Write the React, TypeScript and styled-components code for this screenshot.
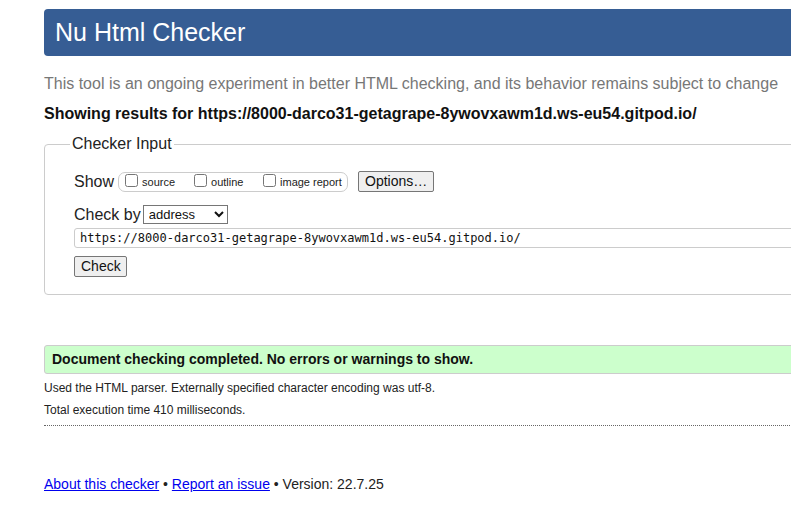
import React from "react";
import styled, { createGlobalStyle } from "styled-components";

const Global = createGlobalStyle`
  html, body { margin: 0; padding: 0; background: #fff; overflow: hidden; }
  body { font-family: "Liberation Sans", Arial, sans-serif; color: #111; }
`;

const Page = styled.div`
  width: 820px;
  padding: 9px 0 0 44px;
  box-sizing: content-box;
`;

const Header = styled.h1`
  margin: 0;
  height: 47px;
  background: #365d94;
  border-radius: 4px;
  color: #fff;
  font-weight: normal;
  font-size: 25px;
  line-height: 47px;
  padding-left: 11px;
`;

const Intro = styled.p`
  margin: 18px 0 0;
  color: #777;
  font-size: 16px;
  line-height: 19px;
`;

const Results = styled.p`
  margin: 11px 0 0;
  font-weight: bold;
  font-size: 16px;
  line-height: 19px;
  color: #111;
`;

const Fieldset = styled.fieldset`
  margin: 12px 0 0;
  padding: 18px 0 16px 29px;
  border: 1px solid #ccc;
  border-radius: 4px;
  height: 124px;
  box-sizing: content-box;
`;

const Legend = styled.legend`
  margin-left: -4px;
  padding: 0 2px;
  font-size: 16px;
  color: #222;
`;

const Row = styled.div<{ $mt?: number }>`
  display: flex;
  align-items: center;
  margin-top: ${(p) => p.$mt ?? 0}px;
  font-size: 16px;
`;

const Label = styled.span<{ $mr?: number }>`
  font-size: 16px;
  color: #222;
  margin-right: ${(p) => p.$mr ?? 4}px;
`;

const Options = styled.span`
  display: inline-flex;
  align-items: center;
  border: 1px solid #ccc;
  border-radius: 7px;
  height: 18px;
  padding: 0 3px 0 6px;
  width: 219px;
  box-sizing: content-box;
`;

const CheckItem = styled.label<{ $w: number }>`
  display: inline-flex;
  align-items: center;
  width: ${(p) => p.$w}px;
  font-size: 11px;
  color: #222;
`;

const Box = styled.input`
  margin: 0 4px 2px 0;
  width: 13px;
  height: 13px;
`;

const Btn = styled.button`
  font-family: "Liberation Sans", Arial, sans-serif;
  font-size: 14px;
  color: #111;
  background: #efefef;
  border: 1px solid #767676;
  border-radius: 2px;
  padding: 1px 6px;
  height: 21px;
  line-height: 17px;
`;

const OptionsBtn = styled(Btn)`
  margin-left: 10px;
  width: 76px;
`;

const Select = styled.select`
  font-family: "Liberation Sans", Arial, sans-serif;
  font-size: 13px;
  width: 85px;
  height: 19px;
  border: 1px solid #767676;
  border-radius: 0;
  background: #fff;
  color: #111;
  padding: 0 1px;
`;

const UrlInput = styled.input`
  display: block;
  width: 760px;
  height: 20px;
  box-sizing: border-box;
  border: 1px solid #ccc;
  border-radius: 3px;
  font-family: "DejaVu Sans Mono", "Liberation Mono", monospace;
  font-size: 12px;
  padding: 0 5px;
  color: #111;
  margin-top: 4px;
`;

const CheckBtn = styled(Btn)`
  margin-top: 8px;
  width: 53px;
  display: block;
`;

const Success = styled.p`
  margin: 50px 0 0;
  height: 29px;
  box-sizing: border-box;
  background: #ccffcc;
  border: 1px solid #ccc;
  border-radius: 3px;
  padding-left: 7px;
  font-size: 14px;
  font-weight: bold;
  line-height: 27px;
  color: #111;
`;

const Detail = styled.p<{ $mt: number }>`
  margin: ${(p) => p.$mt}px 0 0;
  font-size: 12px;
  line-height: 14px;
  color: #222;
`;

const Rule = styled.hr`
  margin: 8px 0 0;
  border: 0;
  border-top: 1px dotted #666;
  height: 0;
`;

const Footer = styled.p`
  margin: 50px 0 0;
  font-size: 14px;
  line-height: 17px;
  color: #222;
`;

const Link = styled.a`
  color: #0000ee;
  text-decoration: underline;
`;

export default function App() {
  return (
    <>
      <Global />
      <Page>
        <Header>Nu Html Checker</Header>
        <Intro>
          This tool is an ongoing experiment in better HTML checking, and its behavior remains subject to change
        </Intro>
        <Results>Showing results for https://8000-darco31-getagrape-8ywovxawm1d.ws-eu54.gitpod.io/</Results>
        <Fieldset>
          <Legend>Checker Input</Legend>
          <Row>
            <Label>Show</Label>
            <Options>
              <CheckItem $w={69}>
                <Box type="checkbox" />
                source
              </CheckItem>
              <CheckItem $w={69}>
                <Box type="checkbox" />
                outline
              </CheckItem>
              <CheckItem $w={81}>
                <Box type="checkbox" />
                image report
              </CheckItem>
            </Options>
            <OptionsBtn>Options…</OptionsBtn>
          </Row>
          <Row $mt={13}>
            <Label $mr={2}>Check by</Label>
            <Select defaultValue="address">
              <option value="address">address</option>
              <option value="file">file upload</option>
              <option value="text">text input</option>
            </Select>
          </Row>
          <UrlInput readOnly value="https://8000-darco31-getagrape-8ywovxawm1d.ws-eu54.gitpod.io/" />
          <CheckBtn>Check</CheckBtn>
        </Fieldset>
        <Success>Document checking completed. No errors or warnings to show.</Success>
        <Detail $mt={7}>Used the HTML parser. Externally specified character encoding was utf-8.</Detail>
        <Detail $mt={8}>Total execution time 410 milliseconds.</Detail>
        <Rule />
        <Footer>
          <Link href="#">About this checker</Link> • <Link href="#">Report an issue</Link> • Version: 22.7.25
        </Footer>
      </Page>
    </>
  );
}
